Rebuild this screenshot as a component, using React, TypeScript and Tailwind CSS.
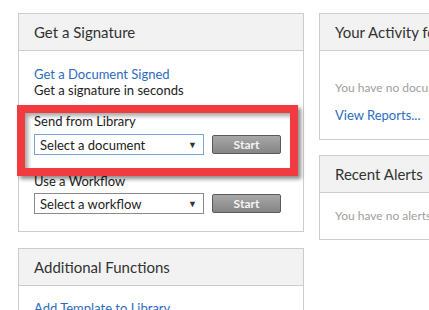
import React from "react";

const font = { fontFamily: "Lato, 'Open Sans', sans-serif" };

function Select({ label, focused }: { label: string; focused?: boolean }) {
  return (
    <div
      className={`flex h-[21px] w-[170px] items-center justify-between border bg-white pl-[5px] pr-[6px] text-[13px] text-[#222] ${
        focused ? "border-[#7ea4d6]" : "border-[#8a8a8a]"
      }`}
    >
      <span>{label}</span>
      <span className="text-[9px] text-[#333]">▼</span>
    </div>
  );
}

function StartBtn() {
  return (
    <div className="flex h-[19px] w-[69px] items-center justify-center rounded-[2px] border border-[#5a5a5a] bg-gradient-to-b from-[#a8a8a8] to-[#858585] text-[12px] font-bold text-[#f4f4f4]">
      Start
    </div>
  );
}

function CardHeader({ title }: { title: string }) {
  return (
    <div className="flex h-[37px] items-center whitespace-nowrap border-b border-[#cccccc] bg-[#f2f2f2] pl-[15px] text-[15px] text-[#333]">
      {title}
    </div>
  );
}

export default function App() {
  return (
    <div className="relative h-[310px] w-[429px] overflow-hidden bg-white" style={font}>
      <div className="flex gap-[15px] pl-[18px] pt-[13px]">
        <div className="flex w-[286px] shrink-0 flex-col gap-[16px]">
          <div className="border border-[#cccccc] bg-white">
            <CardHeader title="Get a Signature" />
            <div className="h-[180px] pl-[15px] pt-[15px] text-[13px] leading-[16px]">
              <div className="text-[#2b6cc0]">Get a Document Signed</div>
              <div className="text-[#222]">Get a signature in seconds</div>
              <div className="mt-[15px] text-[#222]">Send from Library</div>
              <div className="mt-[5px] flex items-center gap-[8px]">
                <Select label="Select a document" focused />
                <StartBtn />
              </div>
              <div className="mt-[18px] text-[#222]">Use a Workflow</div>
              <div className="mt-[4px] flex items-center gap-[8px]">
                <Select label="Select a workflow" />
                <StartBtn />
              </div>
            </div>
          </div>
          <div className="border border-[#cccccc] bg-white">
            <CardHeader title="Additional Functions" />
            <div className="h-[60px] pl-[15px] pt-[14px] text-[13px] leading-[16px] text-[#2b6cc0]">
              Add Template to Library
            </div>
          </div>
        </div>
        <div className="flex w-[200px] shrink-0 flex-col gap-[15px]">
          <div className="border border-[#cccccc] bg-white">
            <CardHeader title="Your Activity for the last 30 days" />
            <div className="h-[88px] whitespace-nowrap pl-[15px] pt-[29px] text-[12px] leading-[16px]">
              <div className="text-[#a0a0a0]">You have no documents</div>
              <div className="mt-[11px] text-[13px] text-[#2b6cc0]">View Reports...</div>
            </div>
          </div>
          <div className="border border-[#cccccc] bg-white">
            <CardHeader title="Recent Alerts" />
            <div className="h-[46px] whitespace-nowrap pl-[15px] pt-[15px] text-[12px] leading-[16px] text-[#a0a0a0]">
              You have no alerts
            </div>
          </div>
        </div>
      </div>
      <div className="pointer-events-none absolute left-[17px] top-[105px] h-[71px] w-[281px] border-[8px] border-[#f03c41] shadow-[3px_3px_4px_rgba(0,0,0,0.45),inset_3px_3px_4px_rgba(0,0,0,0.35)]" />
    </div>
  );
}
